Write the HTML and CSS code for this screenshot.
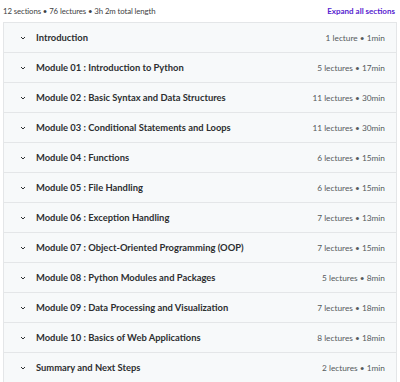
FILE: index.html
```html
<!DOCTYPE html>
<html lang="en">
<head>
  <meta charset="UTF-8">
  <title>Course content</title>
  <link rel="stylesheet" href="styles.css">
</head>
<body>
  <div class="content">
    <div class="summary">
      <span>12 sections • 76 lectures • 3h 2m total length</span>
      <a href="#" class="expand">Expand all sections</a>
    </div>
    <div class="sections" id="sections"></div>
  </div>
  <script>
    const sections = [
      ['Introduction', '1 lecture • 1min'],
      ['Module 01 : Introduction to Python', '5 lectures • 17min'],
      ['Module 02 : Basic Syntax and Data Structures', '11 lectures • 30min'],
      ['Module 03 : Conditional Statements and Loops', '11 lectures • 30min'],
      ['Module 04 : Functions', '6 lectures • 15min'],
      ['Module 05 : File Handling', '6 lectures • 15min'],
      ['Module 06 : Exception Handling', '7 lectures • 13min'],
      ['Module 07 : Object-Oriented Programming (OOP)', '7 lectures • 15min'],
      ['Module 08 : Python Modules and Packages', '5 lectures • 8min'],
      ['Module 09 : Data Processing and Visualization', '7 lectures • 18min'],
      ['Module 10 : Basics of Web Applications', '8 lectures • 18min'],
      ['Summary and Next Steps', '2 lectures • 1min']
    ];

    const list = document.getElementById('sections');

    sections.forEach(s => {
      const row = document.createElement('div');
      row.className = 'section';
      row.innerHTML =
        '<svg class="chevron" viewBox="0 0 6 6"><path d="M1 2 L3 4 L5 2" /></svg>' +
        '<span class="title">' + s[0] + '</span>' +
        '<span class="meta">' + s[1] + '</span>';
      list.appendChild(row);
    });
  </script>
</body>
</html>
```

FILE: styles.css
```css
body {
  margin: 0;
  padding: 0 3px;
  font-family: Lato, 'Liberation Sans', sans-serif;
  color: #2d2f31;
  background: #fff;
}
.summary {
  display: flex;
  justify-content: space-between;
  align-items: center;
  height: 22px;
  font-size: 7.8px;
  letter-spacing: -0.1px;
  color: #3e4143;
}
.expand {
  color: #5624d0;
  font-weight: 700;
  font-size: 8px;
  letter-spacing: 0;
  text-decoration: none;
  margin-right: 2px;
}
.sections {
  border: 1px solid #e4e6e8;
  border-bottom: none;
}
.section {
  display: flex;
  align-items: center;
  height: 29px;
  padding: 0 11px 0 16px;
  background: #f7f9fa;
  border-bottom: 1px solid #e4e6e8;
}
.chevron {
  width: 6px;
  height: 6px;
  margin-right: 10px;
  fill: none;
  stroke: #2d2f31;
  stroke-width: 1;
}
.title {
  flex: 1;
  font-size: 9.4px;
  font-weight: 700;
}
.meta {
  font-size: 8.3px;
  color: #55595c;
}
```
